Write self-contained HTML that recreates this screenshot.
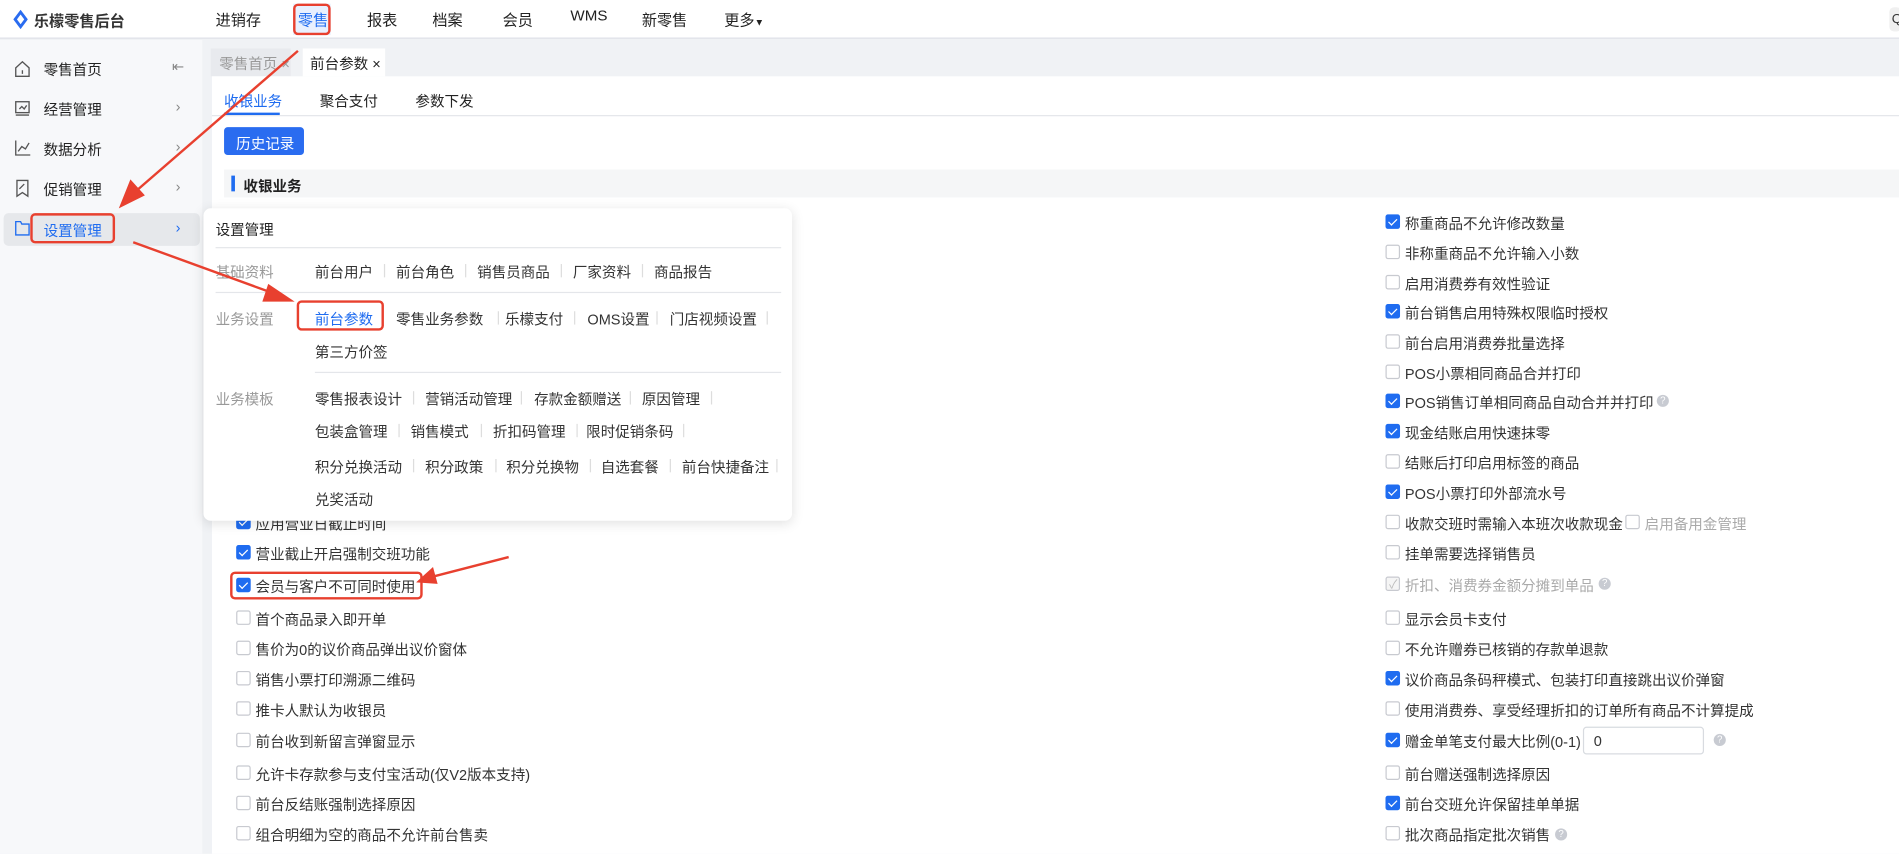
<!DOCTYPE html>
<html><head><meta charset="utf-8"><style>
*{box-sizing:border-box;margin:0;padding:0}
html,body{width:1899px;height:854px;overflow:hidden;background:#fff}
#w{position:absolute;left:0;top:0;width:1568px;height:705px;transform:scale(1.2111);transform-origin:0 0;font-family:"Liberation Sans","Noto Sans CJK SC",sans-serif;font-size:12px;color:#333;background:#f0f2f5}
.a{position:absolute;white-space:nowrap}
.hdr{left:0;top:0;width:1568px;height:32px;background:#fff;border-bottom:1px solid #dcdfe6}
.nav{top:6px;font-size:12.5px;color:#222}
.side{left:0;top:33px;width:167px;height:672px;background:#f7f8fa}
.si{left:36px;font-size:12px;color:#222}
.chev{left:145px;color:#888;font-size:12px}
.panel{left:175px;top:63px;width:1393px;height:642px;background:#fff}
.cb{width:12px;height:12px;border:1px solid #c8cad0;border-radius:2px;background:#fff}
.cb.on{background:#1f6cf0;border-color:#1f6cf0}
.cb.on::after{content:"";position:absolute;left:3px;top:1px;width:3px;height:6px;border:solid #fff;border-width:0 1.6px 1.6px 0;transform:rotate(45deg)}
.q{width:10px;height:10px;border-radius:50%;background:#c8cbd2;color:#fff;font-size:8px;line-height:10px;text-align:center}
.pop{left:168px;top:172px;width:486px;height:258px;background:#fff;border-radius:6px;box-shadow:0 2px 10px rgba(0,0,0,.12)}
.lbl{color:#999}
.sep{width:1px;height:11px;background:#ddd}
.red{border:2px solid #e8402f;border-radius:4px}
</style></head><body><div id="w">
<div class="a hdr"></div>
<svg class="a" style="left:11px;top:8px" width="12" height="16" viewBox="0 0 12 16"><path d="M6 0L12 8 6 16 0 8Z" fill="#2a6cf0"/><path d="M6 4L9 8 6 12 3 8Z" fill="#fff"/></svg>
<div class="a" style="left:28px;top:7px;font-size:12.5px;font-weight:bold;color:#333">乐檬零售后台</div>
<div class="a nav" style="left:178px">进销存</div>
<div class="a" style="left:242px;top:3px;width:31px;height:26px;background:#e8f0fe" ></div>
<div class="a nav" style="left:246px;color:#1f6cf0">零售</div>
<div class="a red" style="left:242px;top:3px;width:31px;height:26px"></div>
<div class="a nav" style="left:303px">报表</div>
<div class="a nav" style="left:357px">档案</div>
<div class="a nav" style="left:415px">会员</div>
<div class="a nav" style="left:471px">WMS</div>
<div class="a nav" style="left:530px">新零售</div>
<div class="a nav" style="left:598px">更多<span style="font-size:8px">▼</span></div>
<div class="a" style="left:1560px;top:6px;width:10px;height:20px;background:#f0f0f0;border-radius:4px;font-size:11px;padding-left:2px;line-height:20px">Q</div>

<div class="a side"></div>
<div class="a" style="left:3px;top:176px;width:162px;height:27px;background:#e6e8eb;border-radius:4px"></div>
<svg class="a" style="left:11px;top:49px" width="15" height="150" viewBox="0 0 15 150" fill="none" stroke="#555" stroke-width="1.1">
<path d="M2 7L7.5 2 13 7V14H2Z M7.5 9V12"/>
<rect x="2" y="35" width="11" height="9"/><path d="M2 46H13 M5 41l2-2 2 2 2-3"/>
<path d="M2 67V79H14 M4 76l3-4 3 2 3-5"/>
<path d="M3 100H12V113L7.5 110 3 113Z M5 107l4-4"/>
<path d="M2 134H6L7 136H13V145H2Z" stroke="#1f6cf0"/>
</svg>
<div class="a si" style="top:49px">零售首页</div><div class="a chev" style="left:142px;top:48px">⇤</div>
<div class="a si" style="top:82px">经营管理</div><div class="a chev" style="top:81px">›</div>
<div class="a si" style="top:115px">数据分析</div><div class="a chev" style="top:114px">›</div>
<div class="a si" style="top:148px">促销管理</div><div class="a chev" style="top:147px">›</div>
<div class="a si" style="top:182px;color:#1f6cf0">设置管理</div><div class="a chev" style="top:181px;color:#1f6cf0">›</div>
<div class="a red" style="left:25px;top:176px;width:70px;height:25px"></div>

<div class="a" style="left:174px;top:40px;width:66px;height:23px;background:#e8eaee;color:#999;padding:4px 0 0 7px">零售首页 ×</div>
<div class="a" style="left:250px;top:40px;width:68px;height:23px;background:#fff;color:#222;padding:4px 0 0 6px">前台参数 ×</div>
<div class="a panel"></div>
<div class="a" style="left:185px;top:75px;color:#1f6cf0">收银业务</div>
<div class="a" style="left:185px;top:93px;width:46px;height:2px;background:#1f6cf0"></div>
<div class="a" style="left:264px;top:75px;color:#222">聚合支付</div>
<div class="a" style="left:343px;top:75px;color:#222">参数下发</div>
<div class="a" style="left:175px;top:95px;width:1393px;height:1px;background:#e4e6ea"></div>
<div class="a" style="left:185px;top:105px;width:66px;height:23px;background:#2a6cf0;color:#fff;border-radius:3px;padding:5px 0 0 10px">历史记录</div>
<div class="a" style="left:185px;top:140px;width:1383px;height:23px;background:#f5f6f7"></div>
<div class="a" style="left:191px;top:145px;width:3px;height:13px;background:#1f6cf0"></div>
<div class="a" style="left:201px;top:145px;font-weight:bold;color:#222">收银业务</div>

<!-- right column -->
<div class="a cb on" style="left:1144px;top:177px"></div><div class="a" style="left:1160px;top:176px">称重商品不允许修改数量</div>
<div class="a cb" style="left:1144px;top:202px"></div><div class="a" style="left:1160px;top:201px">非称重商品不允许输入小数</div>
<div class="a cb" style="left:1144px;top:227px"></div><div class="a" style="left:1160px;top:226px">启用消费券有效性验证</div>
<div class="a cb on" style="left:1144px;top:251px"></div><div class="a" style="left:1160px;top:250px">前台销售启用特殊权限临时授权</div>
<div class="a cb" style="left:1144px;top:276px"></div><div class="a" style="left:1160px;top:275px">前台启用消费券批量选择</div>
<div class="a cb" style="left:1144px;top:301px"></div><div class="a" style="left:1160px;top:300px">POS小票相同商品合并打印</div>
<div class="a cb on" style="left:1144px;top:325px"></div><div class="a" style="left:1160px;top:324px">POS销售订单相同商品自动合并并打印</div><div class="a q" style="left:1368px;top:326px">?</div>
<div class="a cb on" style="left:1144px;top:350px"></div><div class="a" style="left:1160px;top:349px">现金结账启用快速抹零</div>
<div class="a cb" style="left:1144px;top:375px"></div><div class="a" style="left:1160px;top:374px">结账后打印启用标签的商品</div>
<div class="a cb on" style="left:1144px;top:400px"></div><div class="a" style="left:1160px;top:399px">POS小票打印外部流水号</div>
<div class="a cb" style="left:1144px;top:425px"></div><div class="a" style="left:1160px;top:424px">收款交班时需输入本班次收款现金</div>
<div class="a cb" style="left:1342px;top:425px"></div><div class="a" style="left:1358px;top:424px;color:#aaa">启用备用金管理</div>
<div class="a cb" style="left:1144px;top:450px"></div><div class="a" style="left:1160px;top:449px">挂单需要选择销售员</div>
<div class="a cb" style="left:1144px;top:476px;background:#f5f5f5"></div><div class="a" style="left:1147px;top:474px;color:#bbb;font-size:10px">✓</div><div class="a" style="left:1160px;top:475px;color:#aaa">折扣、消费券金额分摊到单品</div><div class="a q" style="left:1320px;top:477px">?</div>
<div class="a cb" style="left:1144px;top:504px"></div><div class="a" style="left:1160px;top:503px">显示会员卡支付</div>
<div class="a cb" style="left:1144px;top:529px"></div><div class="a" style="left:1160px;top:528px">不允许赠券已核销的存款单退款</div>
<div class="a cb on" style="left:1144px;top:554px"></div><div class="a" style="left:1160px;top:553px">议价商品条码秤模式、包装打印直接跳出议价弹窗</div>
<div class="a cb" style="left:1144px;top:579px"></div><div class="a" style="left:1160px;top:578px">使用消费券、享受经理折扣的订单所有商品不计算提成</div>
<div class="a cb on" style="left:1144px;top:605px"></div><div class="a" style="left:1160px;top:604px">赠金单笔支付最大比例(0-1)</div>
<div class="a" style="left:1307px;top:600px;width:100px;height:23px;border:1px solid #d8dbe0;border-radius:3px;padding:4px 0 0 8px">0</div><div class="a q" style="left:1415px;top:606px">?</div>
<div class="a cb" style="left:1144px;top:632px"></div><div class="a" style="left:1160px;top:631px">前台赠送强制选择原因</div>
<div class="a cb on" style="left:1144px;top:657px"></div><div class="a" style="left:1160px;top:656px">前台交班允许保留挂单单据</div>
<div class="a cb" style="left:1144px;top:682px"></div><div class="a" style="left:1160px;top:681px">批次商品指定批次销售</div><div class="a q" style="left:1284px;top:684px">?</div>

<!-- left column -->
<div class="a cb on" style="left:195px;top:425px"></div><div class="a" style="left:211px;top:424px">应用营业日截止时间</div>
<div class="a cb on" style="left:195px;top:450px"></div><div class="a" style="left:211px;top:449px">营业截止开启强制交班功能</div>
<div class="a cb on" style="left:195px;top:477px"></div><div class="a" style="left:211px;top:476px">会员与客户不可同时使用</div>
<div class="a red" style="left:190px;top:472px;width:159px;height:23px"></div>
<div class="a cb" style="left:195px;top:504px"></div><div class="a" style="left:211px;top:503px">首个商品录入即开单</div>
<div class="a cb" style="left:195px;top:529px"></div><div class="a" style="left:211px;top:528px">售价为0的议价商品弹出议价窗体</div>
<div class="a cb" style="left:195px;top:554px"></div><div class="a" style="left:211px;top:553px">销售小票打印溯源二维码</div>
<div class="a cb" style="left:195px;top:579px"></div><div class="a" style="left:211px;top:578px">推卡人默认为收银员</div>
<div class="a cb" style="left:195px;top:605px"></div><div class="a" style="left:211px;top:604px">前台收到新留言弹窗显示</div>
<div class="a cb" style="left:195px;top:632px"></div><div class="a" style="left:211px;top:631px">允许卡存款参与支付宝活动(仅V2版本支持)</div>
<div class="a cb" style="left:195px;top:657px"></div><div class="a" style="left:211px;top:656px">前台反结账强制选择原因</div>
<div class="a cb" style="left:195px;top:682px"></div><div class="a" style="left:211px;top:681px">组合明细为空的商品不允许前台售卖</div>

<!-- popup -->
<div class="a pop"></div>
<div class="a" style="left:178px;top:181px;color:#222">设置管理</div>
<div class="a" style="left:178px;top:204px;width:467px;height:1px;background:#e4e6ea"></div>
<div class="a lbl" style="left:178px;top:216px">基础资料</div>
<div class="a" style="left:260px;top:216px">前台用户</div><div class="a sep" style="left:317px;top:218px"></div>
<div class="a" style="left:327px;top:216px">前台角色</div><div class="a sep" style="left:384px;top:218px"></div>
<div class="a" style="left:394px;top:216px">销售员商品</div><div class="a sep" style="left:463px;top:218px"></div>
<div class="a" style="left:473px;top:216px">厂家资料</div><div class="a sep" style="left:530px;top:218px"></div>
<div class="a" style="left:540px;top:216px">商品报告</div>
<div class="a" style="left:178px;top:241px;width:467px;height:1px;background:#e4e6ea"></div>
<div class="a lbl" style="left:178px;top:255px">业务设置</div>
<div class="a" style="left:260px;top:255px;color:#1f6cf0">前台参数</div>
<div class="a red" style="left:245px;top:248px;width:72px;height:25px"></div>
<div class="a" style="left:327px;top:255px">零售业务参数</div><div class="a sep" style="left:411px;top:257px"></div>
<div class="a" style="left:417px;top:255px">乐檬支付</div><div class="a sep" style="left:474px;top:257px"></div>
<div class="a" style="left:485px;top:255px">OMS设置</div><div class="a sep" style="left:542px;top:257px"></div>
<div class="a" style="left:553px;top:255px">门店视频设置</div><div class="a sep" style="left:633px;top:257px"></div>
<div class="a" style="left:260px;top:282px">第三方价签</div>
<div class="a" style="left:260px;top:307px;width:385px;height:1px;background:#e4e6ea"></div>
<div class="a lbl" style="left:178px;top:321px">业务模板</div>
<div class="a" style="left:260px;top:321px">零售报表设计</div><div class="a sep" style="left:341px;top:323px"></div>
<div class="a" style="left:351px;top:321px">营销活动管理</div><div class="a sep" style="left:430px;top:323px"></div>
<div class="a" style="left:441px;top:321px">存款金额赠送</div><div class="a sep" style="left:520px;top:323px"></div>
<div class="a" style="left:530px;top:321px">原因管理</div><div class="a sep" style="left:587px;top:323px"></div>
<div class="a" style="left:260px;top:348px">包装盒管理</div><div class="a sep" style="left:329px;top:350px"></div>
<div class="a" style="left:339px;top:348px">销售模式</div><div class="a sep" style="left:397px;top:350px"></div>
<div class="a" style="left:407px;top:348px">折扣码管理</div><div class="a sep" style="left:476px;top:350px"></div>
<div class="a" style="left:484px;top:348px">限时促销条码</div><div class="a sep" style="left:564px;top:350px"></div>
<div class="a" style="left:260px;top:377px">积分兑换活动</div><div class="a sep" style="left:341px;top:379px"></div>
<div class="a" style="left:351px;top:377px">积分政策</div><div class="a sep" style="left:409px;top:379px"></div>
<div class="a" style="left:418px;top:377px">积分兑换物</div><div class="a sep" style="left:487px;top:379px"></div>
<div class="a" style="left:496px;top:377px">自选套餐</div><div class="a sep" style="left:553px;top:379px"></div>
<div class="a" style="left:563px;top:377px">前台快捷备注</div><div class="a sep" style="left:641px;top:379px"></div>
<div class="a" style="left:260px;top:404px">兑奖活动</div>

<svg class="a" style="left:0;top:0" width="1568" height="705" viewBox="0 0 1568 705">
<g stroke="#e8402f" stroke-width="2" fill="#e8402f">
<line x1="246" y1="42" x2="112" y2="158"/><path d="M100 170L108 150 118 161Z"/>
<line x1="110" y1="200" x2="228" y2="243"/><path d="M240 248L222 236 218 248Z"/>
<line x1="420" y1="460" x2="358" y2="476"/><path d="M346 480L357 470 360 481Z"/>
</g></svg>
</div></body></html>
